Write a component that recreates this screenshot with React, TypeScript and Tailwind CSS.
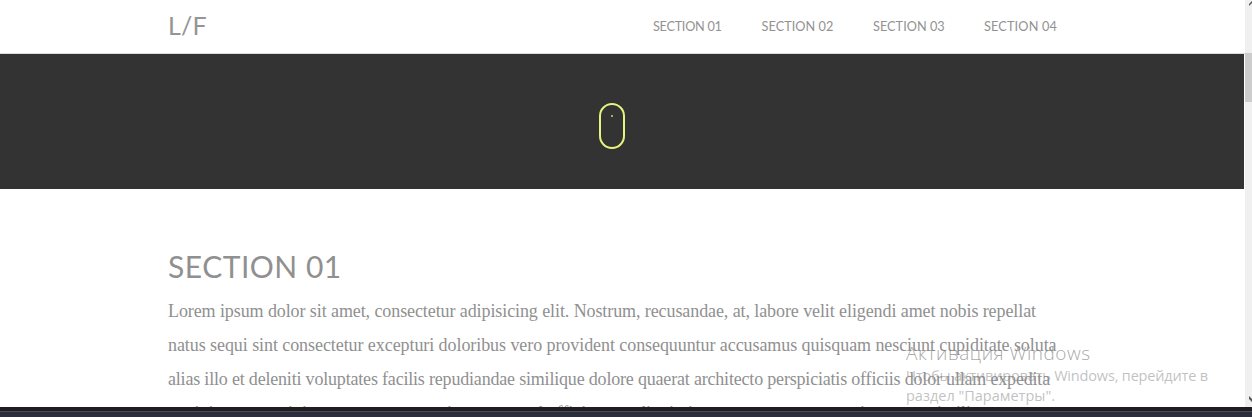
const nav = [
  { label: "SECTION 01", box: "w-[108.5px] tracking-[-0.28px]" },
  { label: "SECTION 02", box: "w-[111.5px] tracking-[0.06px]" },
  { label: "SECTION 03", box: "w-[111px] tracking-[0.04px]" },
  { label: "SECTION 04", box: "w-[80px] tracking-[0.16px]" },
];

const lines = [
  {
    text: "Lorem ipsum dolor sit amet, consectetur adipisicing elit. Nostrum, recusandae, at, labore velit eligendi amet nobis repellat",
    spacing: "tracking-[-0.091px]",
  },
  {
    text: "natus sequi sint consectetur excepturi doloribus vero provident consequuntur accusamus quisquam nesciunt cupiditate soluta",
    spacing: "tracking-[-0.072px]",
  },
  {
    text: "alias illo et deleniti voluptates facilis repudiandae similique dolore quaerat architecto perspiciatis officiis dolor ullam expedita",
    spacing: "tracking-[-0.189px]",
  },
];

const lastLine = [
  { text: "a minima", box: "w-[106px]" },
  { text: "minima", box: "w-[142px]" },
  { text: "maxime", box: "w-[91px]" },
  { text: "quod officia rem", box: "w-[130px]" },
  { text: "dignissimos", box: "w-[147px]" },
  { text: "ea rerum eius", box: "w-[146px]" },
  { text: "similique", box: "w-[80px]" },
];

function Header() {
  return (
    <header className="flex h-[54px] shrink-0 border-b border-[#dcdcdc] bg-white pl-[168px]">
      <div className="w-[485px] pt-[9px] font-['Lato'] text-[25px] leading-[32px] tracking-[0.2px] text-[#959595]">L/F</div>
      <nav className="flex pt-4 font-['Lato'] text-[12.7px] leading-[20px] text-[#929292]">
        {nav.map((n) => (
          <a key={n.label} className={`${n.box} whitespace-nowrap`}>{n.label}</a>
        ))}
      </nav>
    </header>
  );
}

function Hero() {
  return (
    <section className="mr-px flex h-[135px] shrink-0 justify-center bg-[#333333] pr-[20px] pt-[49px]">
      <div className="flex h-[46px] w-[26px] justify-center rounded-[13px] border-2 border-[#e6f47e] pt-[10px]">
        <span className="h-[2px] w-[2px] bg-[#a5ad68]" />
      </div>
    </section>
  );
}

function Watermark() {
  return (
    <div className="absolute left-[906px] top-[340px] whitespace-nowrap font-['Open_Sans'] text-[14.5px] leading-[20px] text-[#8c8c8c]/55">
      <p className="h-[26px] text-[19px] leading-[26px] font-light tracking-[0.5px] text-[#808080]/70">Активация Windows</p>
      <p className="tracking-[-0.17px]">Чтобы активировать Windows, перейдите в</p>
      <p>раздел "Параметры".</p>
    </div>
  );
}

export default function App() {
  return (
    <div className="relative flex h-[417px] w-[1252px] flex-col overflow-hidden bg-white text-[#8a8a8a]">
      <div className="flex h-[407px] overflow-hidden">
        <main className="flex w-[1245px] flex-col">
          <Header />
          <Hero />
          <section className="pl-[168px] pt-[57px]">
            <h2 className="h-[48px] font-['Lato'] text-[30px] leading-[40px] tracking-[0.5px] text-[#909090]">SECTION 01</h2>
            <div className="font-['Liberation_Serif'] text-[18px] leading-[34px] whitespace-nowrap text-[#909090]">
              {lines.map((l) => (
                <p key={l.text} className={l.spacing}>{l.text}</p>
              ))}
              <p className="flex">
                {lastLine.map((w) => (
                  <span key={w.text} className={w.box}>{w.text}</span>
                ))}
              </p>
            </div>
          </section>
        </main>
        <aside className="flex w-[7px] flex-col bg-[#f0f0f0]">
          <svg className="h-[53px] w-[7px]" viewBox="0 0 7 53">
            <path d="M4 6 L7 3 V1 L4 4 Z" fill="#555" />
          </svg>
          <div className="h-[49px] bg-[#cdcdcd]" />
          <svg className="mt-auto h-[20px] w-[7px]" viewBox="0 0 7 20">
            <path d="M4 9 L7 12 V15 L4 12 Z" fill="#555" />
          </svg>
        </aside>
      </div>
      <footer className="flex h-[10px] flex-col bg-[#2b2e3c]">
        <div className="h-[4px] bg-[#1e1e21]" />
        <div className="h-px bg-[#4a4b57]" />
      </footer>
      <Watermark />
    </div>
  );
}
